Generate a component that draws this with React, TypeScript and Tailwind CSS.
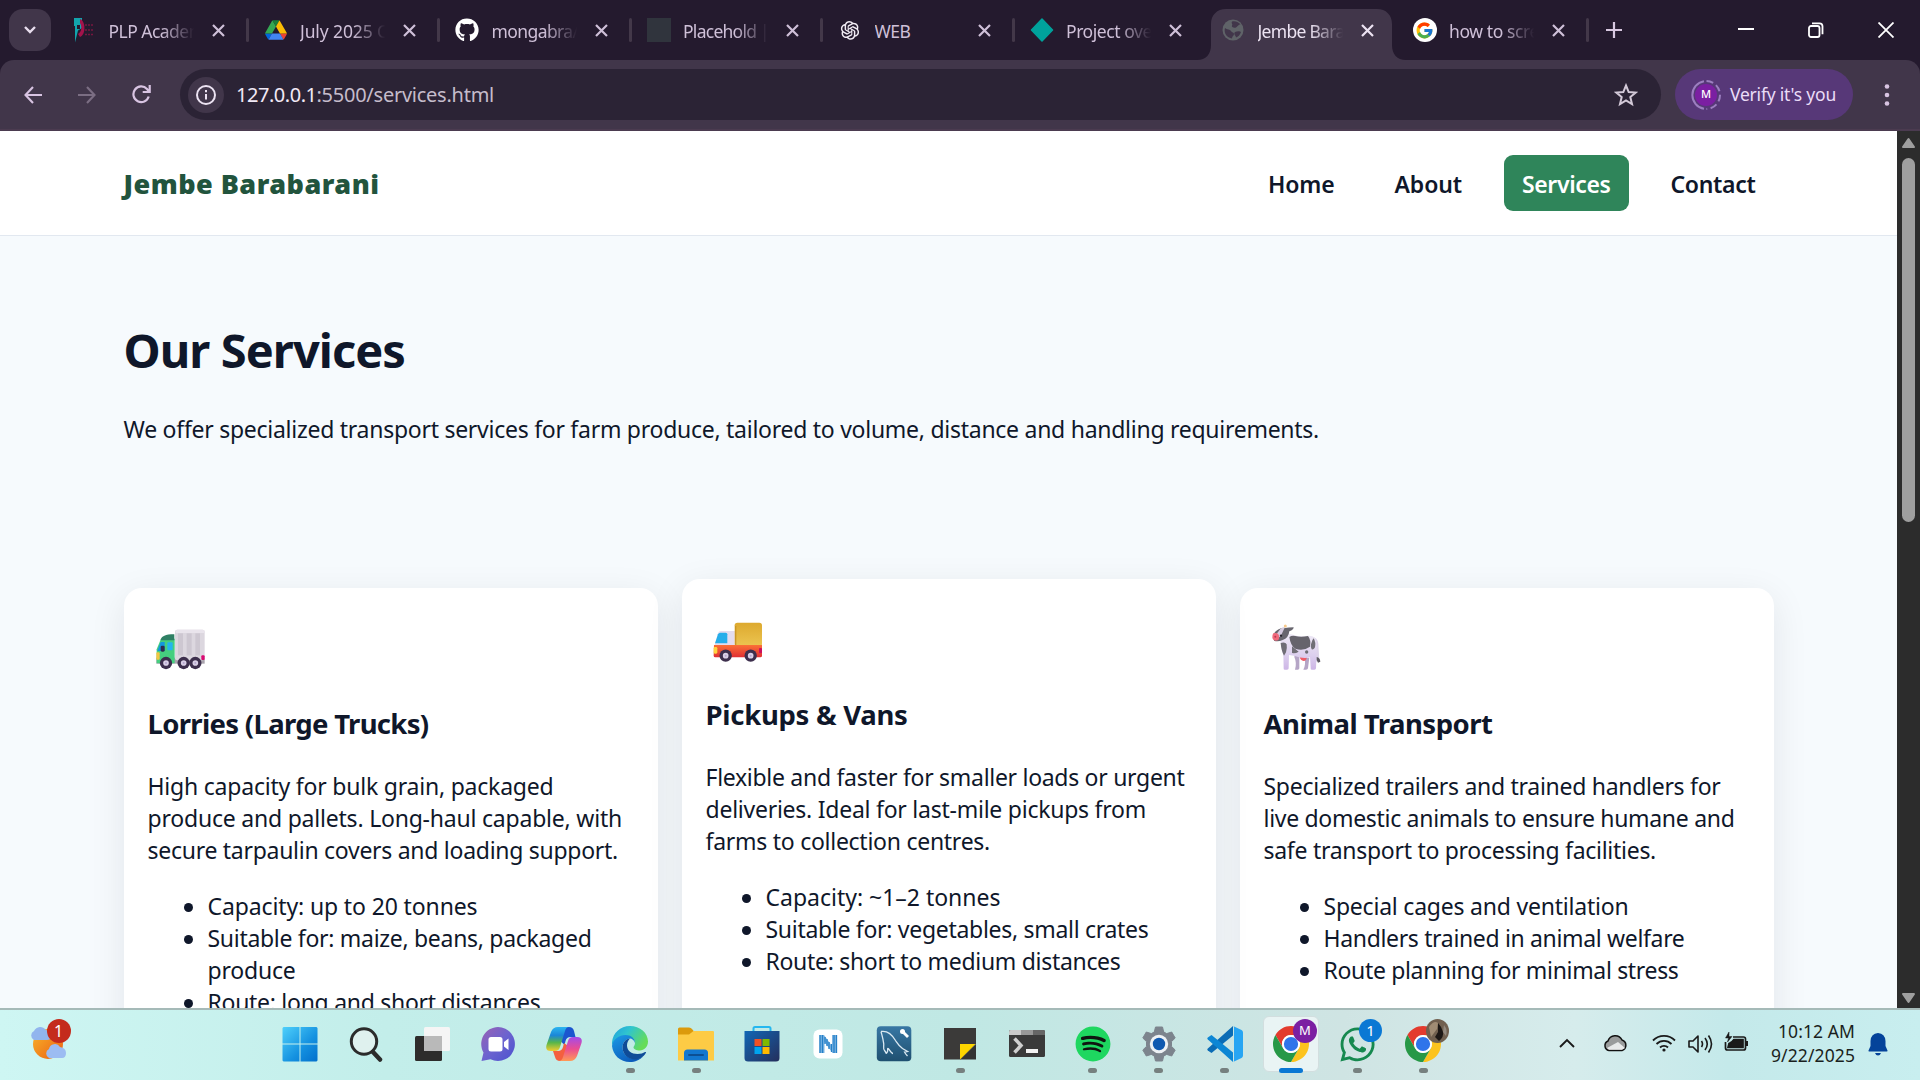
import { useLayoutEffect, useRef, type ReactNode } from "react";
import { FaGithub, FaWhatsapp, FaSpotify } from "react-icons/fa";
import { FcGoogle } from "react-icons/fc";
import { AiOutlineOpenAI } from "react-icons/ai";

/* Single line of text whose tracking is computed so that it spans `w` pixels. */
function Fit({ children, w, className = "" }: { children: string; w: number; className?: string }) {
  const ref = useRef<HTMLSpanElement>(null);
  useLayoutEffect(() => {
    const el = ref.current;
    if (!el) return;
    el.style.letterSpacing = "0px";
    const natural = el.getBoundingClientRect().width;
    el.style.letterSpacing = `${(w - natural) / children.length}px`;
  }, [children, w]);
  return (
    <span ref={ref} className={`inline-block whitespace-nowrap ${className}`}>
      {children}
    </span>
  );
}

function CloseX({ color }: { color: string }) {
  return (
    <svg width="13" height="13" viewBox="0 0 13 13" fill="none" stroke={color} strokeWidth="2.2">
      <path d="M1 1l11 11M12 1L1 12" />
    </svg>
  );
}

function DriveIcon() {
  return (
    <svg width="22" height="20" viewBox="0 0 88 78">
      <path d="M7 67l4 6.500c.8 1.400 2 2.500 3.300 3.300L28 53H.500c0 1.500.4 3.100 1.200 4.500z" fill="#0066da" />
      <path d="M44 25L30 1.200c-1.300.8-2.500 1.900-3.300 3.300L1.700 48.500C.9 49.900.5 51.400.5 53H28z" fill="#34a853" />
      <path d="M73.500 76.800c1.300-.8 2.500-1.900 3.300-3.300l9.300-16c.8-1.400 1.200-2.900 1.200-4.500H59.800l5.900 11.500z" fill="#ea4335" />
      <path d="M44 25L57.500 1.200C56.200.4 54.700 0 53.100 0H34.500c-1.600 0-3.200.5-4.500 1.200z" fill="#188038" />
      <path d="M59.800 53H28L14.200 76.800c1.400.8 2.900 1.200 4.500 1.200h50.300c1.600 0 3.200-.5 4.500-1.200z" fill="#4285f4" />
      <path d="M73.400 26.500L60.700 4.500c-.8-1.400-1.900-2.500-3.200-3.300L44 25l15.800 28h27.500c0-1.500-.4-3.100-1.200-4.500z" fill="#fbbc04" />
    </svg>
  );
}

function PlpIcon() {
  return (
    <svg width="22" height="26" viewBox="0 0 22 26">
      <path d="M1 1h8v10L5 13.500 2 25.500l0-9V9H1z" fill="#12a5ad" />
      <path d="M7 2c6 2 6 16 0 18l-2-3c4-2 4-8 2-11z" fill="#a3134b" />
      <path d="M4 8h3v4H4z" fill="#241a2e" />
      <path d="M12 8h8M12 13h8M12 17.500h8" stroke="#8c1644" strokeWidth="1.500" strokeDasharray="2 1" opacity=".8" />
    </svg>
  );
}

function GlobeIcon() {
  return (
    <svg width="22" height="22" viewBox="0 0 22 22">
      <circle cx="11" cy="11" r="10.500" fill="#5f6368" />
      <path d="M3 9c2 2 5 1 6 3s3 1 3 3-2 2-2 4.500C5 19 1.500 14 3 9zM10 2.500c-1 2 1 2.500 0 4s2 3 4 2 2-3 4.500-3C17 3 13 1.500 10 2.500zM13 13c2-1 5-1 6 0-1 3-3 5-5 5.500 0-2-3-3-1-5.500z" fill="#41364a" />
    </svg>
  );
}

const tabs: { icon: ReactNode; title: string; w: number; active?: boolean; last?: boolean }[] = [
  { icon: <PlpIcon />, title: "PLP Academ", w: 96 },
  { icon: <DriveIcon />, title: "July 2025 C", w: 88 },
  { icon: <FaGithub size={24} color="#fff" />, title: "mongabra/", w: 87 },
  { icon: <span className="block h-6 w-6 bg-[#30343d]" />, title: "Placehold |", w: 86 },
  { icon: <AiOutlineOpenAI size={24} color="#f1ecf4" />, title: "WEB", w: 36 },
  { icon: <svg width="24" height="24" viewBox="0 0 24 24"><path d="M12 1l10.500 11L12 23 1.500 12z" fill="#00a29c" stroke="#00a29c" strokeLinejoin="round" strokeWidth="1.500" /></svg>, title: "Project ove", w: 86 },
  { icon: <GlobeIcon />, title: "Jembe Bara", w: 87, active: true },
  { icon: <span className="flex h-6 w-6 items-center justify-center rounded-full bg-white"><FcGoogle size={19} /></span>, title: "how to scre", w: 90, last: true },
];

function TabStrip() {
  return (
    <div className="flex h-[60px] bg-[#241a2e]">
      <div className="mt-[9px] ml-[9px] flex h-[42px] w-[42px] items-center justify-center rounded-[14px] bg-[#41364a]">
        <svg width="12" height="8" viewBox="0 0 12 8" fill="none" stroke="#e8deee" strokeWidth="2.400"><path d="M1 1l5 5 5-5" /></svg>
      </div>
      <div className="ml-[6px] flex">
        {tabs.map((t) => (
          <div key={t.title} className="relative flex h-[60px] w-[191.500px]">
            {t.active && (
              <svg className="absolute top-[9px] -left-[9px]" width="209" height="51" viewBox="0 0 209 51">
                <path d="M0 51C9 51 14 45 14 36V15C14 6 20 0 29 0H180C189 0 195 6 195 15V36C195 45 200 51 209 51z" fill="#41364a" />
              </svg>
            )}
            <span className="relative ml-[15px] flex h-[60px] w-6 items-center justify-center">{t.icon}</span>
            <span
              className={`relative ml-[12.500px] h-[60px] w-[87px] overflow-hidden text-[17.500px] leading-[63px] ${t.title === "WEB" ? "" : "[mask-image:linear-gradient(to_right,#000_60%,transparent_98%)]"} ${t.active ? "text-[#ece3f2]" : "text-[#cfc0d8]"}`}
            >
              <Fit w={t.w}>{t.title}</Fit>
            </span>
            <span className="relative ml-[15.500px] flex h-[60px] w-[14px] items-center justify-center">
              <CloseX color={t.active ? "#ece3f2" : "#cfc0d8"} />
            </span>
            {!t.active && tabs.indexOf(t) !== 5 && <span className="mt-[18px] ml-auto h-6 w-[3px] rounded bg-[#433849]" />}
            {tabs.indexOf(t) === 5 && <span className="ml-auto" />}
          </div>
        ))}
      </div>
      <svg className="mt-[22px] ml-[17px]" width="16" height="16" viewBox="0 0 16 16" stroke="#d8c8e0" strokeWidth="2.200"><path d="M8 0v16M0 8h16" /></svg>
      <div className="mt-[22px] mr-[26px] ml-auto flex gap-[54px]">
        <svg width="16" height="16" viewBox="0 0 16 16" stroke="#fff" strokeWidth="2"><path d="M0 7h16" /></svg>
        <svg width="16" height="16" viewBox="0 0 16 16" fill="none" stroke="#fff" strokeWidth="1.800"><rect x="1" y="4" width="10.500" height="11" rx="2" /><path d="M4 1.300h7.500a3 3 0 0 1 3 3v8" /></svg>
        <svg width="16" height="16" viewBox="0 0 16 16" stroke="#fff" strokeWidth="1.800"><path d="M.5.500l15 15M15.500.500l-15 15" /></svg>
      </div>
    </div>
  );
}

function Toolbar() {
  return (
    <div className="bg-[#241a2e]">
      <div className="flex h-[71px] items-center rounded-t-[14px] border-b-2 border-[#4b3b50] bg-[#41364a]">
        <svg className="ml-6" width="18" height="18" viewBox="0 0 18 18" fill="none" stroke="#d8c4e2" strokeWidth="2.100"><path d="M18 9H1.500M9 1L1.500 9 9 17" /></svg>
        <svg className="ml-[36px]" width="18" height="18" viewBox="0 0 18 18" fill="none" stroke="#7b6e83" strokeWidth="2.100"><path d="M0 9h16.500M9 1l7.500 8L9 17" /></svg>
        <svg className="ml-[36px]" width="19" height="19" viewBox="0 0 19 19" fill="none" stroke="#d8c4e2" strokeWidth="2.200"><path d="M16.700 11.500A7.800 7.800 0 1 1 15 4l2 2.500M17.700 0v7h-7" /></svg>
        <div className="ml-[29px] flex h-[51px] w-[1481px] items-center rounded-full bg-[#2b2335] pl-2">
          <span className="flex h-9 w-9 items-center justify-center rounded-full bg-[#41364a]">
            <svg width="20" height="20" viewBox="0 0 20 20" fill="none" stroke="#ece3f2" strokeWidth="2"><circle cx="10" cy="10" r="9" /><path d="M10 9v5.500M10 5v2.200" /></svg>
          </span>
          <span className="ml-[12px] flex text-[20px] leading-8">
            <Fit w={80.5} className="text-[#f1e9f5]">127.0.0.1</Fit>
            <Fit w={177.5} className="text-[#c5bccb]">:5500/services.html</Fit>
          </span>
          <svg className="mr-[23px] ml-auto" width="24" height="24" viewBox="0 0 24 24" fill="none" stroke="#d3c9d8" strokeWidth="2"><path d="M12 2.500l2.700 6.600 7 .5-5.400 4.500 1.700 6.900-6-3.700-6 3.700 1.700-6.900-5.400-4.500 7-.5z" /></svg>
        </div>
        <div className="ml-[14px] flex h-[51px] w-[178px] items-center rounded-full bg-[#573878] pl-[16px]">
          <span className="relative flex h-[30px] w-[30px] items-center justify-center">
            <svg className="absolute inset-0" width="30" height="30" viewBox="0 0 30 30" fill="none" stroke="#9c7fc0" strokeWidth="2">
              <path d="M13 28.800A14 14 0 0 1 13 1.200" /><path d="M15.500 1A14 14 0 0 1 29 15A14 14 0 0 1 15.500 29" strokeDasharray="7 3.500" />
            </svg>
            <span className="flex h-[22px] w-[22px] items-center justify-center rounded-full bg-[#7b1fa2] text-[11px] font-medium text-white">M</span>
          </span>
          <Fit w={106} className="ml-[9px] text-[17.500px] text-[#eadcf7]">Verify it's you</Fit>
        </div>
        <svg className="ml-[31px]" width="6" height="24" viewBox="0 0 6 24" fill="#d8c4e2"><circle cx="3" cy="3.500" r="2.300" /><circle cx="3" cy="12" r="2.300" /><circle cx="3" cy="20.500" r="2.300" /></svg>
      </div>
    </div>
  );
}

function Wheel({ x, y }: { x: number; y: number }) {
  return (
    <g>
      <circle cx={x} cy={y} r="18.500" fill="#3d2f4d" />
      <circle cx={x} cy={y} r="8.500" fill="#d9cfe6" />
      <circle cx={x} cy={y} r="3" fill="#b6a6cf" />
    </g>
  );
}

function TruckArt() {
  return (
    <svg className="-ml-[3px] block" width="70" height="60" viewBox="0 0 210 180">
      <rect x="34" y="128" width="145" height="18" fill="#a9a3ad" />
      <rect x="90" y="44" width="89" height="92" rx="6" fill="#dcd7df" />
      <path d="M92 50q0-6 6-6h75q6 0 6 6v4H92z" fill="#e9e4ec" />
      <rect x="99" y="55" width="15" height="66" fill="#cdc7d1" /><rect x="125" y="55" width="15" height="66" fill="#cdc7d1" /><rect x="151" y="55" width="14" height="66" fill="#cdc7d1" />
      <path d="M35 145V103l13-32h41v74z" fill="#45cf7f" />
      <path d="M47 74c3-10 13-16 41-16v18H47z" fill="#2f8064" />
      <path d="M37 108l10-27h12v27z" fill="#1397dd" />
      <rect x="67" y="82" width="16" height="24" rx="3" fill="#23b5ee" />
      <rect x="47" y="92" width="12" height="18" rx="4" fill="#2d2c50" />
      <rect x="34" y="112" width="10" height="22" rx="3" fill="#f2c644" />
      <rect x="169" y="121" width="10" height="14" rx="3" fill="#d90a72" />
      <Wheel x={63} y={144} /><Wheel x={116} y={144} /><Wheel x={151} y={144} />
    </svg>
  );
}

function VanArt() {
  return (
    <svg className="-ml-[3px] block" width="70" height="60" viewBox="0 0 210 180">
      <defs>
        <linearGradient id="vanBody" x1="0" y1="0" x2="0" y2="1"><stop stopColor="#fb7036" /><stop offset="1" stopColor="#e02e33" /></linearGradient>
        <linearGradient id="vanBox" x1="0" y1="0" x2="0" y2="1"><stop stopColor="#dda92e" /><stop offset="1" stopColor="#ecc552" /></linearGradient>
      </defs>
      <path d="M34 120l11-38q2-7 9-7h42v46z" fill="#e3dcee" />
      <path d="M36 112l9-27q2-5 7-5h16q5 0 5 5v27z" fill="#25aeea" />
      <rect x="95" y="50" width="82" height="72" rx="8" fill="url(#vanBox)" />
      <path d="M98 60v58" stroke="#c99626" strokeWidth="4" />
      <path d="M33 117h144v32q0 5-5 5H37q-5 0-5-5z" fill="url(#vanBody)" />
      <rect x="32" y="123" width="11" height="20" rx="4" fill="#ffd33f" />
      <rect x="168" y="126" width="9" height="16" rx="3" fill="#cc0f5e" />
      <Wheel x={68} y={149} /><Wheel x={143} y={149} />
    </svg>
  );
}

function CowArt() {
  return (
    <svg className="-ml-[2px] block" width="70" height="60" viewBox="0 0 210 180">
      <defs>
        <linearGradient id="cowBody" x1="0" y1="0" x2="0" y2="1"><stop stopColor="#eee9f5" /><stop offset=".6" stopColor="#dccfee" /><stop offset="1" stopColor="#cdb5e6" /></linearGradient>
      </defs>
      <path d="M99 118h13v42q0 4-5 4h-8q6-20-2-38zM128 128h14l-4 32q-1 4-6 4h-8q8-14 4-36z" fill="#b5a5c6" />
      <path d="M113 125h22l-2 8q-3 6-8 5-10-2-12-13z" fill="#ef5d68" />
      <path d="M150 66q16 0 19 20l3 50-10 4-8-40z" fill="#ddd3ea" />
      <path d="M56 66q20-14 40-6 14 6 42 2 26-2 27 28l-3 70q0 4-5 4h-8q-4 0-3-5l-2-32q-20 6-48-5l-15-2-1 40q0 4-5 4h-7q-4 0-3-5l-1-42q-8-16-10-55z" fill="url(#cowBody)" />
      <path d="M82 66q8-6 18-3 16 5 38 0 10 12 6 32-20 14-44 6-14-8-18-35z" fill="#66646c" />
      <path d="M56 84q14-4 18 4 2 12-2 24l-6 10q-8-14-10-38zM147 88q3-14 8-18 7 12 4 27-3 8-10 6-4-4-2-15zM90 94l20 16q-10 6-20 4z" fill="#706e76" />
      <circle cx="134" cy="111" r="5" fill="#706e76" />
      <path d="M164 126q10 2 11 14l-7 3q-6-8-4-17z" fill="#5c5962" />
      <path d="M35 56q12-18 34-17 10-2 26-2 0 8-13 12-2 20-20 26-14 6-26 2z" fill="#68666e" />
      <path d="M55 42q6-6 14-6l-14 30q-8 2-12-8z" fill="#d5cbe0" />
      <circle cx="70" cy="33" r="4.500" fill="#f8c98a" />
      <circle cx="57" cy="62" r="3.500" fill="#29272e" />
      <path d="M34 55q12-4 16 4 4 10-2 17-14 4-17-7-1-9 3-14z" fill="#f06a7c" />
      <circle cx="40" cy="65" r="3" fill="#b93a52" />
    </svg>
  );
}

type Line = [string, number];
const cards: { art: ReactNode; title: Line; text: Line[]; items: Line[][]; lift?: boolean }[] = [
  {
    art: <TruckArt />,
    title: ["Lorries (Large Trucks)", 281],
    text: [["High capacity for bulk grain, packaged", 406], ["produce and pallets. Long-haul capable, with", 474.5], ["secure tarpaulin covers and loading support.", 470.5]],
    items: [[["Capacity: up to 20 tonnes", 270]], [["Suitable for: maize, beans, packaged", 384]], [["Route: long and short distances", 333]]],
  },
  {
    art: <VanArt />,
    title: ["Pickups & Vans", 202],
    text: [["Flexible and faster for smaller loads or urgent", 479], ["deliveries. Ideal for last-mile pickups from", 440.5], ["farms to collection centres.", 284.5]],
    items: [[["Capacity: ~1–2 tonnes", 235]], [["Suitable for: vegetables, small crates", 383]], [["Route: short to medium distances", 355]]],
    lift: true,
  },
  {
    art: <CowArt />,
    title: ["Animal Transport", 229],
    text: [["Specialized trailers and trained handlers for", 457], ["live domestic animals to ensure humane and", 471], ["safe transport to processing facilities.", 392.5]],
    items: [[["Special cages and ventilation", 305]], [["Handlers trained in animal welfare", 361]], [["Route planning for minimal stress", 355]]],
  },
];
cards[0].items[1].push(["produce", 88]);

function Card({ c }: { c: (typeof cards)[number] }) {
  return (
    <article className={`h-[520px] rounded-[18px] bg-white px-6 pt-[27px] shadow-[0_9px_36px_rgba(16,24,40,0.085)] ${c.lift ? "-translate-y-[9px]" : ""}`}>
      {c.art}
      <h3 className="mt-[31px] text-[27.500px] leading-9 font-bold"><Fit w={c.title[1]}>{c.title[0]}</Fit></h3>
      <p className="mt-[28px] flex flex-col items-start">
        {c.text.map(([t, w]) => <Fit key={t} w={w}>{t}</Fit>)}
      </p>
      <ul className="mt-6 flex flex-col">
        {c.items.map((item) => (
          <li key={item[0][0]} className="flex">
            <span className="mt-[12.500px] ml-9 h-[9.500px] w-[9.500px] rounded-full bg-[#0f172a]" />
            <span className="ml-[14.500px] flex flex-col items-start">
              {item.map(([t, w]) => <Fit key={t} w={w}>{t}</Fit>)}
            </span>
          </li>
        ))}
      </ul>
    </article>
  );
}

const nav: Line[] = [["Home", 66.5], ["About", 67.5], ["Services", 88.5], ["Contact", 85]];

function Page() {
  return (
    <div className="flex h-[877px] overflow-hidden">
      <div className="h-full w-[1897px] overflow-hidden bg-[#f6fafd] text-[23px] leading-8 text-[#0f172a]">
        <header className="h-[105px] border-b border-[#e2e8f0] bg-white">
          <div className="mx-auto flex h-[104px] w-[1650px] items-center justify-between">
            <Fit w={256} className="pt-[2px] text-[27px] font-black text-[#22543d]">Jembe Barabarani</Fit>
            <nav className="flex gap-6">
              {nav.map(([t, w]) => (
                <a key={t} className={`rounded-[9px] px-[18px] pt-[13px] pb-[11px] font-[560] ${t === "Services" ? "bg-[#2f855a] text-white" : ""}`}>
                  <Fit w={w}>{t}</Fit>
                </a>
              ))}
            </nav>
          </div>
        </header>
        <main className="mx-auto w-[1650px]">
          <h1 className="mt-[82px] text-[47px] leading-[64px] font-bold"><Fit w={281.5}>Our Services</Fit></h1>
          <p className="mt-[31px]"><Fit w={1195.5}>We offer specialized transport services for farm produce, tailored to volume, distance and handling requirements.</Fit></p>
          <div className="mt-[143px] grid grid-cols-3 gap-6">
            {cards.map((c) => <Card key={c.title[0]} c={c} />)}
          </div>
        </main>
      </div>
      <div className="flex w-[23px] flex-col items-center bg-[#2c2c2c]">
        <svg className="mt-[6px]" width="15" height="12" viewBox="0 0 15 12"><path d="M7.500 2L13 10H2z" fill="#9f9f9f" stroke="#9f9f9f" strokeWidth="2" strokeLinejoin="round" /></svg>
        <div className="mt-[9px] h-[364px] w-[13px] rounded-full bg-[#9f9f9f]" />
        <svg className="mt-auto mb-[4px]" width="15" height="12" viewBox="0 0 15 12"><path d="M7.500 10L13 2H2z" fill="#9f9f9f" stroke="#9f9f9f" strokeWidth="2" strokeLinejoin="round" /></svg>
      </div>
    </div>
  );
}

function ChromeLogo() {
  return (
    <svg width="36" height="36" viewBox="2 2 44 44">
      <path d="M24 13H43.050A22 22 0 0 0 4.950 13L14.470 29.500A11 11 0 0 1 24 13z" fill="#e33b2e" />
      <path d="M43.050 13A22 22 0 0 1 24 46L33.530 29.500A11 11 0 0 0 24 13z" fill="#fcc31e" />
      <path d="M24 46A22 22 0 0 1 4.950 13L14.470 29.500A11 11 0 0 0 33.530 29.500z" fill="#279847" />
      <circle cx="24" cy="24" r="11" fill="#fff" /><circle cx="24" cy="24" r="8.700" fill="#2f74ea" />
    </svg>
  );
}

const S = { width: 36, height: 36, viewBox: "0 0 36 36" };

const apps: { name: string; icon: ReactNode; dot?: boolean; active?: boolean; badge?: ReactNode }[] = [
  {
    name: "start",
    icon: (
      <svg {...S}>
        <defs><linearGradient id="win" x1="0" y1="0" x2="1" y2="1"><stop stopColor="#4fd0fb" /><stop offset=".6" stopColor="#1491e0" /><stop offset="1" stopColor="#0370cc" /></linearGradient></defs>
        <path d="M1.500 1H17.500V17.500H.500V2zM18.500 1H34.500L35.500 2V17.500H18.500zM.500 18.500H17.500V35.500H1.500L.500 34.500zM18.500 18.500H35.500V34.500L34.500 35.500H18.500z" fill="url(#win)" />
      </svg>
    ),
  },
  { name: "search", icon: <svg {...S} fill="none" stroke="#2b2b2b"><circle cx="16" cy="15.500" r="12.700" strokeWidth="3" fill="#dff1ee" /><path d="M25 26l7 7.500" strokeWidth="4.500" strokeLinecap="round" /></svg> },
  { name: "tasks", icon: <svg {...S}><rect x="1" y="10" width="27" height="25" rx="1.500" fill="#2d2c2b" /><rect x="10" y="1" width="26" height="24" rx="1.500" fill="#f5f5f5" /><path d="M10 10h18v15H10z" fill="#b9b9b9" /></svg> },
  {
    name: "chat",
    icon: (
      <svg {...S}>
        <defs><linearGradient id="chat" x1="0" y1="0" x2="1" y2="1"><stop stopColor="#9a62b4" /><stop offset=".5" stopColor="#6c63cf" /><stop offset="1" stopColor="#4b52cf" /></linearGradient></defs>
        <path d="M18 1a17 17 0 1 1-7.500 32.300L1.500 35l2-8.500A17 17 0 0 1 18 1z" fill="url(#chat)" />
        <rect x="8.500" y="11" width="14" height="14.500" rx="2.500" fill="#fff" /><path d="M24 16l4.500-3.500V24L24 20.500z" fill="#fff" />
      </svg>
    ),
  },
  {
    name: "copilot",
    icon: (
      <svg {...S}>
        <defs>
          <linearGradient id="cpA" x1="0" y1="0" x2="0" y2="1"><stop stopColor="#2bb5f0" /><stop offset=".35" stopColor="#1b86d8" /><stop offset=".65" stopColor="#57b64a" /><stop offset="1" stopColor="#f3cc2e" /></linearGradient>
          <linearGradient id="cpB" x1="0" y1="0" x2="0" y2="1"><stop stopColor="#a34bea" /><stop offset=".5" stopColor="#ea4d92" /><stop offset="1" stopColor="#ff9a55" /></linearGradient>
        </defs>
        <path d="M12 1h11q4 0 5 4l1.500 6h-5q-4 0-5 4l-1 4-6-6z" fill="#1b55cf" />
        <path d="M24 35H14q-4 0-5-4L7 25h5q4 0 5-4l1-4 7 5z" fill="#f4603f" />
        <path d="M12 1h11q-3 0-4 4l-5 16q-1 4-5 4H5q-6 0-4.500-6L5 6q2-5 7-5z" fill="url(#cpA)" />
        <path d="M24 35H12.500q3.500 0 4.500-4l5-16q1-4 5-4h4q6 0 4.500 6L31 30q-2 5-7 5z" fill="url(#cpB)" />
      </svg>
    ),
  },
  {
    name: "edge", dot: true,
    icon: (
      <svg {...S}>
        <defs>
          <linearGradient id="edA" x1="0" y1="0" x2="1" y2=".5"><stop stopColor="#1f9de0" /><stop offset=".45" stopColor="#2fc4cf" /><stop offset="1" stopColor="#66dc58" /></linearGradient>
          <linearGradient id="edB" x1="0" y1="0" x2=".6" y2="1"><stop stopColor="#1c9ae6" /><stop offset="1" stopColor="#0c5cbb" /></linearGradient>
        </defs>
        <path d="M18 0C28 0 36 7 36 15.500 36 21 32 24.500 28 24.500S21.500 23 21.500 21.500c0-1.500 1.500-2 1.500-4.500 0-4-4-7-9-7C7 10 2 14 0 20-1 9 7 0 18 0z" fill="url(#edA)" />
        <path d="M0 20C1 13 7 9 13.500 9 19 9 23 12.500 23 17c-1-3-3-4.500-5-4.500-4 0-7.500 4-7.500 9C10.500 28 16 33 23 33c3 0 6-1 8-2.500C28 34 23 36 18 36 8 36 1 29 0 20z" fill="url(#edB)" />
        <path d="M10.500 21.500c0-5 3.500-9 7.500-9-2 2-3 4-3 7 0 5 4.500 8.500 10.500 8.500 3.500 0 5.500-1 7.500-2 .8-.4 1.300.3.800 1C31.500 31 27.500 33.500 23 33.500c-7 0-12.500-5.500-12.500-12z" fill="#0f4c98" />
      </svg>
    ),
  },
  { name: "files", dot: true, icon: <svg {...S}><path d="M0 3q0-1.500 1.500-1.500H11q2 0 3 1.500l2 2.500V10H0z" fill="#dc9a0c" /><path d="M0 8.500h11L15.500 5H35q1 0 1 1v28.500H0z" fill="#fdcb45" /><path d="M6 34.500V27q0-3.500 3.500-3.500h17Q30 23.500 30 27v7.500z" fill="#1277cf" /><path d="M11 29h14" stroke="#0c4f93" strokeWidth="2" strokeLinecap="round" /></svg> },
  { name: "store", icon: <svg {...S}><defs><linearGradient id="st" x1="0" y1="0" x2="1" y2="1"><stop stopColor="#1166b5" /><stop offset="1" stopColor="#252f5c" /></linearGradient></defs><path d="M9.500 7V2.500Q9.500 1 11 1h14q1.500 0 1.500 1.500V7" fill="none" stroke="#25b7ef" strokeWidth="2" /><path d="M.500 5h35v27q0 3.500-3.500 3.500H4Q.500 35.500.500 32z" fill="url(#st)" /><path d="M10.500 13h7v7h-7z" fill="#f25022" /><path d="M18.500 13h7v7h-7z" fill="#7fba00" /><path d="M10.500 21h7v7h-7z" fill="#00a4ef" /><path d="M18.500 21h7v7h-7z" fill="#ffb900" /></svg> },
  { name: "notes", icon: <svg {...S}><rect x="3.500" y="3.500" width="29" height="29" rx="6" fill="#fff" /><path d="M9.500 9h4.500l8 11V9h5v18h-4.500l-8-11v11h-5z" fill="#7db4e2" /><path d="M10 9v18M12.500 9v18M15 11v7M17 13v7M19 16v7M21.500 18v8M24 9v18M26.500 9v18" stroke="#2580c8" strokeWidth="1.300" /></svg> },
  { name: "mysql", icon: <svg {...S}><defs><linearGradient id="my" x1="0" y1="0" x2="0" y2="1"><stop stopColor="#3877a4" /><stop offset="1" stopColor="#1f5070" /></linearGradient></defs><rect x=".8" y=".3" width="34.500" height="35" rx="4" fill="url(#my)" /><path d="M5 5.500c6-1 11 3 14.500 9 2 3 3 5 7 8l5 3-3 .5c1 2 2 3 3 4M5 5.500c1 4 2 7 2.500 11 1 3-1 6 1 8s1 4 2.500 2 0-4 1-4 3 5 5 5" fill="none" stroke="#dbe9f2" strokeWidth="1.300" /><path d="M26 5l6 6" stroke="#fff" strokeWidth="2.800" /><circle cx="26.500" cy="5.500" r="2.500" fill="#fff" /></svg> },
  { name: "sticky", dot: true, icon: <svg {...S}><path d="M2 2h32v16L18.500 33.500H2z" fill="#3b3a39" /><path d="M18 33.500h16V18z" fill="#333" /><path d="M18 18h15.500L18 33.500z" fill="#fdd500" /></svg> },
  { name: "terminal", icon: <svg {...S}><rect y="4" width="36" height="27" rx="1.500" fill="#3a3a3a" /><path d="M0 9V5.500Q0 4 1.500 4H12v5z" fill="#c9c9c9" /><path d="M12 4h12v5H12z" fill="#989898" /><path d="M24 4h10.500q1.500 0 1.500 1.500V9H24z" fill="#666" /><path d="M5.500 12.500l6.500 7-6.500 7" fill="none" stroke="#cfcfcf" strokeWidth="3.500" /><path d="M17 23h12v4H17z" fill="#f2f2f2" /></svg> },
  { name: "spotify", dot: true, icon: <svg {...S}><circle cx="18" cy="18" r="15" fill="#0f1511" /><FaSpotify size={36} color="#1ed760" /></svg> },
  { name: "settings", dot: true, icon: <svg {...S}><path d="M14.500 1h7l1.200 5 3 1.600 5-1.600 3.500 6-3.700 3.600v4.800l3.700 3.600-3.500 6-5-1.600-3 1.600-1.200 5h-7l-1.200-5-3-1.600-5 1.600-3.500-6 3.700-3.600v-4.800L1.800 12l3.500-6 5 1.600 3-1.600z" fill="#7c848d" stroke="#7c848d" strokeLinejoin="round" /><circle cx="18" cy="18" r="9.200" fill="#edf1f4" /><circle cx="18" cy="18" r="6.200" fill="#0f59b0" /></svg> },
  { name: "code", dot: true, icon: <svg {...S}><path d="M26 0v9.500L4.500 27 .800 24.500q-1-1 0-2z" fill="#0b6cb5" /><path d="M26 36v-9.500L4.500 9 .800 11.500q-1 1 0 2z" fill="#0c86d4" /><path d="M26 0l8.500 4Q36 4.800 36 6.500v23q0 1.700-1.500 2.500L26 36q1 0 1-1.500v-33Q27 0 26 0z" fill="#27a5f3" /></svg> },
  { name: "chrome", active: true, icon: <ChromeLogo />, badge: <span className="absolute top-[9px] right-[7px] flex h-6 w-6 items-center justify-center rounded-full bg-[#7b1fa2] text-[13px] text-white">M</span> },
  { name: "whatsapp", dot: true, icon: <FaWhatsapp size={39} color="#16894f" className="-m-[1.500px]" />, badge: <span className="absolute top-[9px] right-[8px] flex h-[23px] w-[23px] items-center justify-center rounded-full bg-[#0a78d4] text-[15px] text-white">1</span> },
  { name: "chrome-guest", dot: true, icon: <ChromeLogo />, badge: <svg className="absolute top-[9px] right-[7px]" width="23" height="24" viewBox="0 0 23 24"><ellipse cx="11.500" cy="12" rx="11.500" ry="12" fill="#71604f" /><path d="M3 8q5-7 9-4l-1 6-6 8z" fill="#a08c74" /><path d="M12 4q4 4 5 9t-4 9l-4-4 3-5z" fill="#1d1815" /><path d="M18 6q4 5 2 11l-3-4z" fill="#93897e" /></svg> },
];

function Taskbar() {
  return (
    <div className="flex h-[72px] border-t-2 border-[#a5bab8] bg-[linear-gradient(90deg,#cef6f3_0%,#c3eeea_20%,#c0e8e4_50%,#cfe4e3_70%,#d6ecec_82%,#c4e9ea_90%,#c8eeef_100%)]">
      <div className="relative mt-[14px] ml-[28px] h-[40px] w-[46px]">
        <svg width="44" height="44" viewBox="0 0 44 44">
          <defs><linearGradient id="sun" x1="0" y1="0" x2="1" y2="1"><stop stopColor="#f8b52a" /><stop offset="1" stopColor="#ec5f12" /></linearGradient></defs>
          <circle cx="20" cy="20" r="15" fill="url(#sun)" />
          <path d="M6 16a5 5 0 0 1 0-9 7 7 0 0 1 12-1q5 1 5 6 0 4-4 4z" fill="#91b5ee" />
          <path d="M21 34a5 5 0 0 1 0-9 6 6 0 0 1 11-2q6 1 6 6 0 5-4 5z" fill="#9cbcf2" />
        </svg>
        <span className="absolute -top-[5px] left-[18.500px] flex h-6 w-6 items-center justify-center rounded-full bg-[#c42b1c] text-[16px] text-white">1</span>
      </div>
      <div className="ml-[192.500px] flex">
        {apps.map((a) => (
          <div key={a.name} className="relative flex h-[70px] w-[66.100px] flex-col items-center">
            {a.active && <span className="absolute top-[6px] left-[5px] h-[56px] w-[56px] rounded-md border border-[#d2dedf] bg-[#e9f4f4]" />}
            <span className="relative mt-4 flex h-9 items-center justify-center">{a.icon}</span>
            {a.dot && <span className="mt-[6px] h-[5px] w-[9px] rounded-full bg-[#76807f]" />}
            {a.active && <span className="relative mt-[6px] h-[5px] w-6 rounded-full bg-[#0a78d4]" />}
            {a.badge}
          </div>
        ))}
      </div>
      <div className="mr-[32px] ml-auto flex items-center text-[17.500px] leading-6 text-[#1a1f20]">
        <svg className="-mt-1" width="16" height="10" viewBox="0 0 16 10" fill="none" stroke="#1a1a1a" strokeWidth="1.900"><path d="M1 9l7-7 7 7" /></svg>
        <svg className="-mt-1 ml-[28px]" width="25" height="18" viewBox="0 0 25 18"><path d="M6 16.500a5 5 0 0 1-1-9.500 7.500 7.500 0 0 1 14-1 5.500 5.500 0 0 1 0 10.500z" fill="#9a9c9c" stroke="#111" strokeWidth="1.500" /><path d="M4 14l11-6 7 6-3 1.700H6z" fill="#e8eaea" /></svg>
        <svg className="-mt-[5px] ml-[24px]" width="24" height="18" viewBox="0 0 24 18" fill="none" stroke="#1a1a1a" strokeWidth="1.800"><path d="M1 6.500a15.500 15.500 0 0 1 22 0M4.500 10a10.500 10.500 0 0 1 15 0M8 13.500a5.600 5.600 0 0 1 8 0" /><circle cx="12" cy="16" r="1.600" fill="#1a1a1a" stroke="none" /></svg>
        <svg className="-mt-[2px] ml-[12px]" width="25" height="20" viewBox="0 0 25 20" fill="none" stroke="#1a1a1a" strokeWidth="1.600"><path d="M1 7v6h4l5 5V2L5 7z" strokeLinejoin="round" /><path d="M13.500 7q2 3 0 6M17 4q4.500 6 0 12M20.500 1.500q6 8.500 0 17" /></svg>
        <svg className="-mt-[6px] ml-[11px]" width="25" height="20" viewBox="0 0 25 20" fill="none" stroke="#1a1a1a" strokeWidth="1.700"><path d="M9 5h10.500q2 0 2 2v9q0 2-2 2h-16q-2 0-2-2v-6" /><path d="M10 7.500h9v8H4l1-4q3-1 5-4z" fill="#1a1a1a" /><path d="M22.500 9v5" strokeWidth="3" /><path d="M5 0L1.500 6h3L3.500 10 8 4.500H5z" fill="#1a1a1a" strokeWidth=".5" /></svg>
        <div className="-mt-[4px] ml-[20px] flex w-[86px] flex-col items-end">
          <Fit w={77}>10:12 AM</Fit>
          <Fit w={84}>9/22/2025</Fit>
        </div>
        <svg className="-mt-[2px] ml-[13px]" width="20" height="24" viewBox="0 0 20 24" fill="#04439a"><path d="M10 1q7 .500 7.500 8v5l2 4.500q.3 1-.7 1H1.200q-1 0-.7-1l2-4.500V9Q3 1.500 10 1z" /><path d="M7 21h6q-1 2.500-3 2.500T7 21z" /></svg>
      </div>
    </div>
  );
}

export default function App() {
  return (
    <div className="flex h-[1080px] w-[1920px] flex-col overflow-hidden font-['Noto_Sans',sans-serif]">
      <TabStrip />
      <Toolbar />
      <Page />
      <Taskbar />
    </div>
  );
}
